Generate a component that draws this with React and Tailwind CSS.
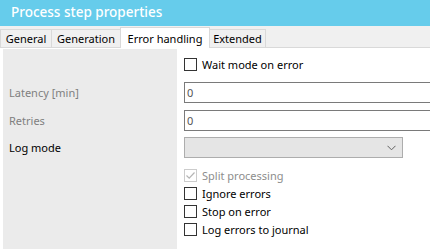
import { useState } from 'react'

const tabs = [
    { name: 'General', width: 'w-[52px]' },
    { name: 'Generation', width: 'w-[70px]' },
    { name: 'Error handling', width: 'w-[90px]' },
    { name: 'Extended', width: 'w-[57px]' },
]

const Checkbox = ({ label, checked, disabled, onChange }) => (
    <label className={`flex items-center gap-[5px] h-[18px] ${disabled ? 'text-[#8d8d8d]' : 'text-black'}`}>
        <span
            onClick={disabled ? undefined : onChange}
            className={`flex items-center justify-center w-[13px] h-[13px] border bg-white ${disabled ? 'border-[#cccccc]' : 'border-[#333333]'}`}
        >
            {checked && (
                <svg width="11" height="11" viewBox="0 0 11 11" fill="none">
                    <path d="M1.5 5.5 L4.2 8.2 L9.5 2.5" stroke={disabled ? '#b5b5b5' : '#333'} strokeWidth="1.2" />
                </svg>
            )}
        </span>
        <span>{label}</span>
    </label>
)

const App = () => {
    const [activeTab, setActiveTab] = useState('Error handling')
    const [flags, setFlags] = useState({ wait: false, ignore: false, stop: false, journal: false })
    const toggle = (key) => setFlags({ ...flags, [key]: !flags[key] })

    return (
        <div className="w-[430px] h-[249px] overflow-hidden bg-white text-[11px] leading-none" style={{ fontFamily: '"Segoe UI", "Noto Sans", sans-serif' }}>
            <div className="h-[26px] bg-[#66cceb] flex items-center pl-[11px] text-white text-[13.5px] font-medium">
                Process step properties
            </div>

            <div className="h-[22px] bg-[#f0f0f0] border-b border-[#d9d9d9] flex items-end">
                {tabs.map((tab) => (
                    <button
                        key={tab.name}
                        onClick={() => setActiveTab(tab.name)}
                        className={
                            tab.name === activeTab
                                ? `${tab.width} h-[21px] -mb-px -ml-px bg-white border border-b-0 border-[#d9d9d9] text-black`
                                : `${tab.width} h-[18px] bg-[#f0f0f0] border border-b-0 border-[#d9d9d9] -ml-px first:ml-0 text-black`
                        }
                    >
                        {tab.name}
                    </button>
                ))}
            </div>

            <div className="flex pt-[1px] pl-[3px]">
                <div className="w-[174px] shrink-0 h-[200px] bg-[#ebebeb] pl-[6px]">
                    <div className="h-[29px]" />
                    <div className="h-[28px] flex items-center text-[#7f7f7f]">Latency [min]</div>
                    <div className="h-[28px] flex items-center text-[#7f7f7f]">Retries</div>
                    <div className="h-[27px] flex items-center text-black">Log mode</div>
                </div>

                <div className="flex-1 pl-[7px]">
                    <div className="h-[29px] flex items-center pt-[2px]">
                        <Checkbox label="Wait mode on error" checked={flags.wait} onChange={() => toggle('wait')} />
                    </div>
                    <div className="h-[28px] flex items-center">
                        <input defaultValue="0" className="w-[260px] shrink-0 h-[21px] border border-[#7a7a7a] px-[2px] text-[#555] outline-none" />
                    </div>
                    <div className="h-[28px] flex items-center">
                        <input defaultValue="0" className="w-[260px] shrink-0 h-[21px] border border-[#7a7a7a] px-[2px] text-[#555] outline-none" />
                    </div>
                    <div className="h-[27px] flex items-center">
                        <div className="w-[219px] h-[21px] border border-[#adadad] bg-[#e5e5e5] flex items-center justify-end pr-[6px]">
                            <svg width="9" height="6" viewBox="0 0 9 6" fill="none">
                                <path d="M0.5 0.8 L4.5 4.8 L8.5 0.8" stroke="#606060" strokeWidth="1" />
                            </svg>
                        </div>
                    </div>
                    <div className="pt-[5px] flex flex-col">
                        <Checkbox label="Split processing" checked disabled />
                        <Checkbox label="Ignore errors" checked={flags.ignore} onChange={() => toggle('ignore')} />
                        <Checkbox label="Stop on error" checked={flags.stop} onChange={() => toggle('stop')} />
                        <Checkbox label="Log errors to journal" checked={flags.journal} onChange={() => toggle('journal')} />
                    </div>
                </div>
            </div>
        </div>
    )
}

export default App
